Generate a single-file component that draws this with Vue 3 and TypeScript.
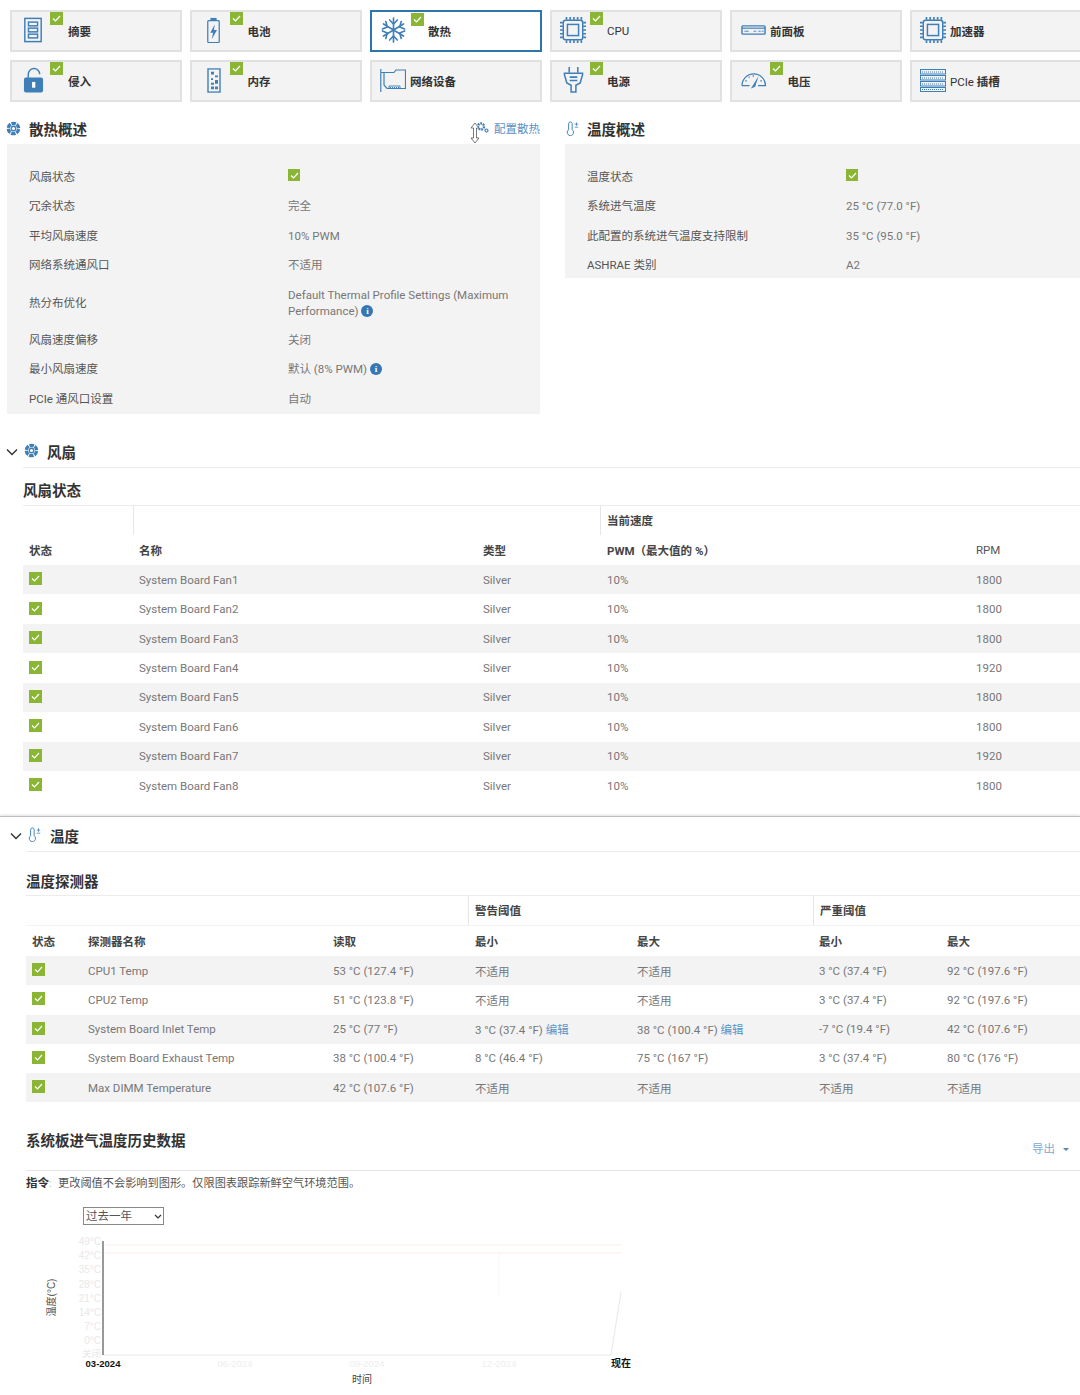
<script setup lang="ts">
interface NavItem {
  label: string
  latin?: string
  icon: string
  ok: boolean
  active?: boolean
  pad: number
  w: number
  h: number
  gap: number
}

const blue = '#3f7fb8'
const bladeList = [0, 60, 120, 180, 240, 300]
  .map(a => `<path transform="rotate(${a} 8 8)" d="M5.2 1.300A7.300 7.300 0 0 1 11.200 1.400L9.800 4.700A3.900 3.900 0 0 0 6.600 4.500Z"/>`)
  .join('')
const icons: Record<string, { vb: string; body: string }> = {
  summary: { vb: '0 0 22 28', body: `<g fill="none" stroke="${blue}" stroke-width="1.600"><rect x="2" y="1.500" width="18" height="25"/><rect x="6" y="5.500" width="10" height="4"/><rect x="6" y="12" width="10" height="4"/><rect x="6" y="18.500" width="10" height="4"/></g>` },
  battery: { vb: '0 0 17 28', body: `<rect x="2" y="4" width="13" height="23.500" rx="1" fill="none" stroke="${blue}" stroke-width="1.400"/><rect x="5" y="1" width="7" height="3" fill="${blue}"/><path d="M10 8L4.800 17H8L6.500 24L12.500 14H9Z" fill="${blue}"/>` },
  snow: { vb: '0 0 26 26', body: `<g fill="none" stroke="${blue}" stroke-width="1.700" stroke-linecap="round"><path d="M13 1V25M2.600 7L23.400 19M2.600 19L23.400 7"/><path d="M9 3L13 7L17 3M9 23L13 19L17 23M1.500 12L6.500 10L5 4.500M24.500 14L19.500 16L21 21.500M1.500 14L6.500 16L5 21.500M24.500 12L19.500 10L21 4.500"/></g>` },
  cpu: { vb: '0 0 28 28', body: `<g fill="none" stroke="${blue}" stroke-width="1.600"><rect x="3.500" y="3.500" width="21" height="21" rx="2.500"/><rect x="8" y="8" width="12" height="12"/><path d="M7 0V3M11 0V3M15 0V3M19 0V3M23 0V3M7 25V28M11 25V28M15 25V28M19 25V28M23 25V28M0 6H3M0 10H3M0 14H3M0 18H3M0 22H3M25 6H28M25 10H28M25 14H28M25 18H28M25 22H28" stroke-width="1.800"/></g>` },
  panel: { vb: '0 0 26 11', body: `<g fill="none" stroke="${blue}"><rect x="1" y="1" width="24" height="9" rx="1" stroke-width="1.500"/><path d="M1 3.500H25" stroke-width="1.300"/><path d="M3.500 6.800H8M13 6.800H16M18 6.800H20.500M21.500 6.800H23.500" stroke-width="1"/></g>` },
  lock: { vb: '0 0 22 27', body: `<path d="M5.500 12V7.500a6 6 0 0 1 12 0" fill="none" stroke="${blue}" stroke-width="1.500"/><rect x="1" y="11" width="20" height="15.500" rx="2" fill="${blue}"/><rect x="9.500" y="15.500" width="3.400" height="6" fill="#fff"/>` },
  memory: { vb: '0 0 14 27', body: `<rect x="1" y="1" width="12" height="25" fill="none" stroke="${blue}" stroke-width="1.400"/><path d="M4 4h3v3h-3zM8 8h3v2h-3zM4 11h2v2h-2zM8 13h3v4h-3zM4 16h3v2h-3zM4 20h3v3h-3zM8 20h3v3h-3z" fill="${blue}"/>` },
  net: { vb: '0 0 26 23', body: `<g fill="none" stroke="${blue}" stroke-width="1.200"><path d="M0.800 0V23"/><path d="M1 3.500H14L16 1H25.500V19.500H7L4 16V3.500"/><path d="M9 19.500V17H20V19.500" stroke-width="0.900"/><path d="M10 18.500H19" stroke-width="1" stroke-dasharray="1 1"/></g>` },
  plug: { vb: '0 0 22 27', body: `<g fill="none" stroke="${blue}" stroke-width="1.600"><path d="M6.500 0V6M15.500 0V6"/><path d="M1.500 6.500H20.500V8L18 16.500L13.500 19V26H8.500V19L4 16.500L1.500 8Z"/><path d="M7 10.500H15M7 14H15"/></g>` },
  gauge: { vb: '0 0 27 19', body: `<g fill="none" stroke="${blue}" stroke-width="1.300"><path d="M1 15.500a12.500 12.500 0 0 1 25 0H18M9 15.500H1"/><path d="M4.500 10.500h1.600M8 6.500h1.300M13 4.500v1.600M22 10.500h-1.600"/></g><path d="M18.500 5.500L15 16.500L10.500 18.500Z" fill="${blue}"/>` },
  slots: { vb: '0 0 26 23', body: `<g fill="none" stroke="${blue}"><rect x="0.500" y="0.500" width="25" height="4.500"/><rect x="0.500" y="6.500" width="25" height="4.500"/><rect x="0.500" y="12.500" width="25" height="4.500"/><rect x="0.500" y="18.500" width="25" height="4"/><path d="M2 3H24M2 9H24M2 15H24M2 20.500H24" stroke-dasharray="1 1"/></g>` },
  fan: { vb: '0 0 16 16', body: `<g fill="${blue}">${bladeList}</g><circle cx="8" cy="8" r="2.400" fill="none" stroke="${blue}" stroke-width="1.400"/>` },
  thermo: { vb: '0 0 16 17', body: `<path d="M3 10V3a2 2 0 0 1 4 0v7a3.600 3.600 0 1 1-4 0Z" fill="none" stroke="${blue}" stroke-width="1.100"/><path d="M10 3.500h4M12 1.500v4M10 7h4" stroke="${blue}" stroke-width="0.900"/>` }
}

const navItems: NavItem[] = [
  { label: '摘要', icon: 'summary', ok: true, pad: 11, w: 20, h: 26, gap: 25 },
  { label: '电池', icon: 'battery', ok: true, pad: 14, w: 15, h: 26, gap: 26.5 },
  { label: '散热', icon: 'snow', ok: true, active: true, pad: 9, w: 25, h: 26, gap: 22 },
  { label: '', latin: 'CPU', icon: 'cpu', ok: true, pad: 8, w: 26, h: 26, gap: 21 },
  { label: '前面板', icon: 'panel', ok: false, pad: 9, w: 25, h: 10, gap: 4 },
  { label: '加速器', icon: 'cpu', ok: false, pad: 8, w: 26, h: 26, gap: 4 },
  { label: '侵入', icon: 'lock', ok: true, pad: 11, w: 21, h: 26, gap: 24 },
  { label: '内存', icon: 'memory', ok: true, pad: 15, w: 14, h: 25, gap: 26.5 },
  { label: '网络设备', icon: 'net', ok: false, pad: 8, w: 26, h: 23, gap: 4 },
  { label: '电源', icon: 'plug', ok: true, pad: 11, w: 21, h: 26, gap: 23 },
  { label: '电压', icon: 'gauge', ok: true, pad: 9, w: 25.5, h: 18, gap: 21 },
  { label: '插槽', latin: 'PCIe ', icon: 'slots', ok: false, pad: 8, w: 26, h: 23, gap: 4 }
]

const coolingRows = [
  { k: '风扇状态', check: true },
  { k: '冗余状态', v: '完全' },
  { k: '平均风扇速度', v: '10% PWM' },
  { k: '网络系统通风口', v: '不适用' },
  { k: '热分布优化', v: 'Default Thermal Profile Settings (Maximum Performance)', info: true, tall: true },
  { k: '风扇速度偏移', v: '关闭' },
  { k: '最小风扇速度', v: '默认 (8% PWM)', info: true },
  { k: 'PCIe 通风口设置', v: '自动' }
]
const tempRows = [
  { k: '温度状态', check: true },
  { k: '系统进气温度', v: '25 °C (77.0 °F)' },
  { k: '此配置的系统进气温度支持限制', v: '35 °C (95.0 °F)' },
  { k: 'ASHRAE 类别', v: 'A2' }
]
const fans = [1800, 1800, 1800, 1920, 1800, 1800, 1920, 1800].map((rpm, i) => ({ name: `System Board Fan${i + 1}`, rpm }))

const NA = '不适用'
const probes = [
  { n: 'CPU1 Temp', r: '53 °C (127.4 °F)', wmin: NA, wmax: NA, cmin: '3 °C (37.4 °F)', cmax: '92 °C (197.6 °F)' },
  { n: 'CPU2 Temp', r: '51 °C (123.8 °F)', wmin: NA, wmax: NA, cmin: '3 °C (37.4 °F)', cmax: '92 °C (197.6 °F)' },
  { n: 'System Board Inlet Temp', r: '25 °C (77 °F)', wmin: '3 °C (37.4 °F)', wmax: '38 °C (100.4 °F)', edit: true, cmin: '-7 °C (19.4 °F)', cmax: '42 °C (107.6 °F)' },
  { n: 'System Board Exhaust Temp', r: '38 °C (100.4 °F)', wmin: '8 °C (46.4 °F)', wmax: '75 °C (167 °F)', cmin: '3 °C (37.4 °F)', cmax: '80 °C (176 °F)' },
  { n: 'Max DIMM Temperature', r: '42 °C (107.6 °F)', wmin: NA, wmax: NA, cmin: NA, cmax: NA }
]

const yTicks = [
  { t: '49°C', y: 1240 }, { t: '42°C', y: 1254 }, { t: '35°C', y: 1268 }, { t: '28°C', y: 1283 },
  { t: '21°C', y: 1297 }, { t: '14°C', y: 1311 }, { t: '7°C', y: 1325 }, { t: '0°C', y: 1339 }
]
const xTicks = [{ t: '06-2024', x: 235 }, { t: '09-2024', x: 367 }, { t: '12-2024', x: 499 }]
</script>

<template>
  <div class="page">
    <nav class="nav">
      <a
        v-for="item in navItems"
        :key="item.latin + item.label"
        class="tile"
        :class="{ active: item.active }"
        :style="{ paddingLeft: item.pad + 'px' }"
      >
        <svg
          class="tile-icon"
          :style="{ marginRight: item.gap + 'px' }"
          :width="item.w"
          :height="item.h"
          :viewBox="icons[item.icon].vb"
          preserveAspectRatio="none"
          v-html="icons[item.icon].body"
        ></svg>
        <span v-if="item.ok" class="badge">
          <svg width="13" height="13" viewBox="0 0 13 13"><path d="M3 6.500L5.500 9L10 4" fill="none" stroke="#fff" stroke-width="1.200"/></svg>
        </span>
        <span class="tile-label"><span v-if="item.latin" class="latin">{{ item.latin }}</span>{{ item.label }}</span>
      </a>
    </nav>

    <div class="overview">
      <section class="ov-col ov-left">
        <header class="ov-head">
          <svg class="ov-icon" width="15" height="15" :viewBox="icons.fan.vb" v-html="icons.fan.body"></svg>
          <h2>散热概述</h2>
          <a class="config">
            <svg width="22" height="24" viewBox="0 0 22 24">
              <circle cx="11" cy="5.500" r="3" fill="none" stroke="#3f7fb8" stroke-width="2.400" stroke-dasharray="1.800 0.800"/>
              <circle cx="16.500" cy="9.500" r="1.500" fill="none" stroke="#3f7fb8" stroke-width="1.200"/>
              <path d="M5 2L1 7H3.500V17H1L5 22L9 17H6.500V7H9Z" fill="#fff" stroke="#555" stroke-width="0.800"/>
            </svg>
            配置散热
          </a>
        </header>
        <div class="panel">
          <div v-for="r in coolingRows" :key="r.k" class="kv" :class="{ tall: r.tall }">
            <span class="k">{{ r.k }}</span>
            <span class="v">
              <span v-if="r.check" class="check small"><svg width="13" height="13" viewBox="0 0 13 13"><path d="M3 6.500L5.500 9L10 4" fill="none" stroke="#fff" stroke-width="1.200"/></svg></span>
              {{ r.v }}
              <span v-if="r.info" class="info">i</span>
            </span>
          </div>
        </div>
      </section>
      <section class="ov-col ov-right">
        <header class="ov-head">
          <svg class="ov-icon thermo" width="14" height="15" :viewBox="icons.thermo.vb" v-html="icons.thermo.body"></svg>
          <h2>温度概述</h2>
        </header>
        <div class="panel">
          <div v-for="r in tempRows" :key="r.k" class="kv">
            <span class="k">{{ r.k }}</span>
            <span class="v">
              <span v-if="r.check" class="check small"><svg width="13" height="13" viewBox="0 0 13 13"><path d="M3 6.500L5.500 9L10 4" fill="none" stroke="#fff" stroke-width="1.200"/></svg></span>
              {{ r.v }}
            </span>
          </div>
        </div>
      </section>
    </div>

    <section class="fan-section">
      <header class="sec-head">
        <svg class="chev" width="12" height="8" viewBox="0 0 12 8"><path d="M1 1.500L6 6.500L11 1.500" fill="none" stroke="#333" stroke-width="1.400"/></svg>
        <svg class="sec-icon" width="15" height="15" :viewBox="icons.fan.vb" v-html="icons.fan.body"></svg>
        <h2>风扇</h2>
      </header>
      <div class="body-fan">
        <h3 class="sub">风扇状态</h3>
        <table class="tbl fan-tbl">
          <colgroup><col class="f1"><col class="f2"><col class="f3"><col class="f4"><col class="f5"></colgroup>
          <thead>
            <tr class="group"><th></th><th colspan="2" class="bl"></th><th colspan="2" class="bl">当前速度</th></tr>
            <tr><th>状态</th><th>名称</th><th>类型</th><th>PWM（最大值的 %）</th><th class="plain">RPM</th></tr>
          </thead>
          <tbody>
            <tr v-for="f in fans" :key="f.name">
              <td class="c-status"><span class="check"><svg width="13" height="13" viewBox="0 0 13 13"><path d="M3 6.500L5.500 9L10 4" fill="none" stroke="#fff" stroke-width="1.200"/></svg></span></td>
              <td>{{ f.name }}</td><td>Silver</td><td>10%</td><td>{{ f.rpm }}</td>
            </tr>
          </tbody>
        </table>
      </div>
    </section>

    <section class="temp-section">
      <header class="sec-head">
        <svg class="chev" width="12" height="8" viewBox="0 0 12 8"><path d="M1 1.500L6 6.500L11 1.500" fill="none" stroke="#333" stroke-width="1.400"/></svg>
        <svg class="sec-icon" width="14" height="15" :viewBox="icons.thermo.vb" v-html="icons.thermo.body"></svg>
        <h2>温度</h2>
      </header>
      <div class="body-temp">
        <h3 class="sub sub-line">温度探测器</h3>
        <table class="tbl probe-tbl">
          <colgroup><col class="p1"><col class="p2"><col class="p3"><col class="p4"><col class="p5"><col class="p6"><col class="p7"></colgroup>
          <thead>
            <tr class="group"><th colspan="3"></th><th colspan="2" class="bl">警告阈值</th><th colspan="2" class="bl">严重阈值</th></tr>
            <tr><th>状态</th><th>探测器名称</th><th>读取</th><th>最小</th><th>最大</th><th>最小</th><th>最大</th></tr>
          </thead>
          <tbody>
            <tr v-for="p in probes" :key="p.n">
              <td class="c-status"><span class="check"><svg width="13" height="13" viewBox="0 0 13 13"><path d="M3 6.500L5.500 9L10 4" fill="none" stroke="#fff" stroke-width="1.200"/></svg></span></td>
              <td>{{ p.n }}</td>
              <td>{{ p.r }}</td>
              <td>{{ p.wmin }}<a v-if="p.edit" class="edit"> 编辑</a></td>
              <td>{{ p.wmax }}<a v-if="p.edit" class="edit"> 编辑</a></td>
              <td>{{ p.cmin }}</td>
              <td>{{ p.cmax }}</td>
            </tr>
          </tbody>
        </table>

        <div class="hist-head">
          <h3>系统板进气温度历史数据</h3>
          <a class="export">导出<i class="caret"></i></a>
        </div>
        <p class="note"><b>指令</b><span class="colon">:</span>更改阈值不会影响到图形。仅限图表跟踪新鲜空气环境范围。</p>
        <div class="range-wrap">
          <select class="range"><option>过去一年</option></select>
          <svg class="range-chev" width="8" height="5" viewBox="0 0 8 5"><path d="M1 1L4 4L7 1" fill="none" stroke="#333" stroke-width="1.200"/></svg>
        </div>
        <svg class="chart" width="660" height="172" viewBox="0 1224 660 172">
          <g font-size="10" fill="#e8e8e8" text-anchor="end" font-family="Liberation Sans, Noto Sans CJK SC, sans-serif">
            <text v-for="t in yTicks" :key="t.t" x="101" :y="t.y + 3.500">{{ t.t }}</text>
            <text x="101" y="1355.500" font-size="9.500">关闭</text>
          </g>
          <path d="M105 1244H622M105 1252H622" stroke="#fbecea" stroke-width="1" fill="none"/>
          <path d="M499 1252V1296" stroke="#f7f3f3" fill="none"/>
          <path d="M103 1354H611L621 1291" stroke="#e6e8ec" stroke-width="1" fill="none"/>
          <path d="M103 1240V1354" stroke="#777" stroke-width="1.500" fill="none"/>
          <g font-family="Liberation Sans, Noto Sans CJK SC, sans-serif" text-anchor="middle">
            <text x="103" y="1366" font-size="9.500" font-weight="700" fill="#111">03-2024</text>
            <text v-for="t in xTicks" :key="t.t" :x="t.x" y="1366" font-size="9.500" fill="#eeeeee">{{ t.t }}</text>
            <text x="621" y="1366" font-size="10" font-weight="700" fill="#111">现在</text>
            <text x="362" y="1382" font-size="10" fill="#444">时间</text>
            <text transform="translate(55 1296.500) rotate(-90)" font-size="10" fill="#555">温度(°C)</text>
          </g>
        </svg>
      </div>
    </section>
  </div>
</template>

<style>
html, body { margin: 0; background: #fff; }
</style>

<style scoped>
.page {
  width: 1080px;
  height: 1395px;
  overflow: hidden;
  background: #fff;
  font-family: Roboto, "Noto Sans CJK SC", sans-serif;
  font-size: 11.5px;
  color: #666;
  box-sizing: border-box;
  padding-top: 10px;
}
.nav {
  display: grid;
  grid-template-columns: repeat(6, 172px);
  grid-auto-rows: 42px;
  gap: 8px;
  padding-left: 10px;
}
.tile {
  position: relative;
  display: flex;
  align-items: center;
  box-sizing: border-box;
  background: #f3f3f3;
  border: 2px solid #e1e1e1;
  color: #333;
  font-weight: 700;
}
.tile.active {
  background: #fff;
  border-color: #2f75ad;
}
.tile.active .badge { left: 39px; top: 1px; }
.tile-icon {
  flex: none;
  margin-top: -1.5px;
}
.tile-label { white-space: pre; }
.latin { font-weight: 400; }
.badge {
  position: absolute;
  left: 38px;
  top: 0;
  width: 13px;
  height: 13px;
  background: #8ab535;
  line-height: 0;
}
.overview {
  display: flex;
  gap: 25px;
  padding-left: 7px;
  margin-top: 16px;
}
.ov-col { flex: none; }
.ov-left { width: 533px; }
.ov-right { width: 530px; }
.ov-head {
  position: relative;
  display: flex;
  align-items: center;
  box-sizing: border-box;
  height: 26px;
  padding-bottom: 5px;
  color: #333;
}
.ov-icon { margin-left: -1px; margin-right: 8px; }
.ov-icon.thermo { margin-left: 1px; margin-right: 7px; }
h2, h3 { margin: 0; color: #333; font-size: 14.5px; font-weight: 700; }
.config {
  position: absolute;
  right: 0;
  top: 0;
  display: flex;
  align-items: center;
  height: 20px;
  gap: 2px;
  color: #5a90c3;
}
.config svg { margin-top: 10px; }
.panel {
  background: #f3f3f3;
  padding-top: 18px;
}
.ov-right .panel {
  box-sizing: border-box;
  height: 134px;
  overflow: hidden;
}
.kv {
  display: flex;
  align-items: center;
  min-height: 29.5px;
  padding-left: 22px;
  line-height: 16px;
}
.kv.tall { min-height: 45px; }
.k { width: 259px; flex: none; color: #555; }
.v { width: 225px; color: #777; }
.check {
  display: inline-block;
  width: 13px;
  height: 13px;
  background: #8ab535;
  vertical-align: middle;
  line-height: 0;
}
.check.small { width: 12px; height: 12px; overflow: hidden; vertical-align: 0; }
.info {
  display: inline-block;
  width: 12px;
  height: 12px;
  border-radius: 50%;
  background: #3377b5;
  color: #fff;
  font: 700 9px/12px "Liberation Serif", serif;
  text-align: center;
  vertical-align: 1px;
}
.sec-head {
  position: relative;
  display: flex;
  align-items: center;
  height: 30px;
}
.sec-head h2 { margin-top: -1px; }
.chev { flex: none; }
.fan-section { margin-top: 23px; padding-left: 6px; }
.fan-section .sec-icon { margin: -3px 8px 0 6px; }
.sec-head::after {
  content: "";
  position: absolute;
  left: 17px;
  right: 0;
  bottom: -1px;
  height: 1px;
  background: #ececec;
}
.body-fan { padding-left: 17px; }
.sub {
  box-sizing: border-box;
  height: 38.5px;
  line-height: 30px;
  padding-top: 10.5px;
}
.tbl {
  table-layout: fixed;
  border-collapse: separate;
  border-spacing: 0;
}
.fan-tbl { width: 1066px; }
.f1 { width: 110px; }
.f2 { width: 344px; }
.f3 { width: 123px; }
.f4 { width: 369px; }
.f5 { width: 120px; }
.probe-tbl { width: 1065px; }
.p1 { width: 56px; }
.p2 { width: 245px; }
.p3 { width: 141px; }
.p4 { width: 163px; }
.p5 { width: 182px; }
.p6 { width: 128px; }
.p7 { width: 150px; }
.tbl th, .tbl td {
  padding: 0 6px;
  text-align: left;
  white-space: nowrap;
  box-sizing: border-box;
}
.tbl th {
  height: 30px;
  padding-bottom: 1px;
  font-weight: 700;
  color: #444;
}
.tbl th.plain { font-weight: 400; color: #555; }
.tbl .group th { border-top: 1px solid #ececec; }
.tbl th.bl { border-left: 1px solid #e6e6e6; }
.tbl td { height: 29.45px; color: #777; }
.fan-tbl tr:not(.group) th:nth-child(n+4), .fan-tbl td:nth-child(n+4) { padding-left: 7px; }
.probe-tbl tr:not(.group) th:nth-child(4), .probe-tbl td:nth-child(4) { padding-left: 7px; }
.tbl tbody tr:nth-child(odd) td { background: #f3f3f3; }
.tbl .c-status { line-height: 0; padding-bottom: 2px; }
.temp-section {
  position: relative;
  margin-top: 15px;
  padding-left: 9px;
  padding-top: 4px;
  border-top: 1px solid #bdbdbd;
  box-shadow: 0 -1px 2px rgba(0, 0, 0, .12);
  background: #fff;
}
.temp-section .chev { margin-left: 1px; }
.temp-section .sec-icon { margin: -3px 8px 0 6px; }
.body-temp { padding-left: 17px; }
.sub-line {
  height: 45.5px;
  line-height: 30px;
  padding-top: 17px;
  border-bottom: 1px solid #ececec;
}
.probe-tbl .group th { border-top: none; border-bottom: 1px solid #f3f3f3; }
.probe-tbl td { height: 29.25px; }
.edit { color: #5b94c8; }
.hist-head {
  position: relative;
  display: flex;
  justify-content: space-between;
  height: 68.5px;
  box-sizing: border-box;
  padding-top: 29px;
  border-bottom: 1px solid #e6e6e6;
  line-height: 22px;
}
.export {
  position: absolute;
  left: 1006px;
  top: 35.5px;
  color: #82a9d0;
  white-space: nowrap;
}
.caret {
  display: inline-block;
  margin-left: 8px;
  border: 3px solid transparent;
  border-top: 3.5px solid #5a83ad;
  border-bottom: 0;
  vertical-align: 2px;
}
.note {
  margin: 0;
  height: 24px;
  line-height: 25px;
  font-size: 11.2px;
  color: #555;
}
.note b { color: #333; font-size: 11.5px; }
.colon { display: inline-block; width: 9px; color: #bbb; }
.range-wrap {
  position: relative;
  width: 81px;
  margin: 12px 0 0 57px;
}
.range {
  display: block;
  appearance: none;
  width: 81px;
  height: 18px;
  padding: 0 0 0 2px;
  box-sizing: border-box;
  border: 1px solid #888;
  border-radius: 0;
  background: #fff;
  color: #555;
  font: 11.5px Roboto, "Noto Sans CJK SC", sans-serif;
}
.range-chev {
  position: absolute;
  left: 71px;
  top: 7px;
  pointer-events: none;
}
.chart {
  display: block;
  margin-left: -26px;
}
</style>
